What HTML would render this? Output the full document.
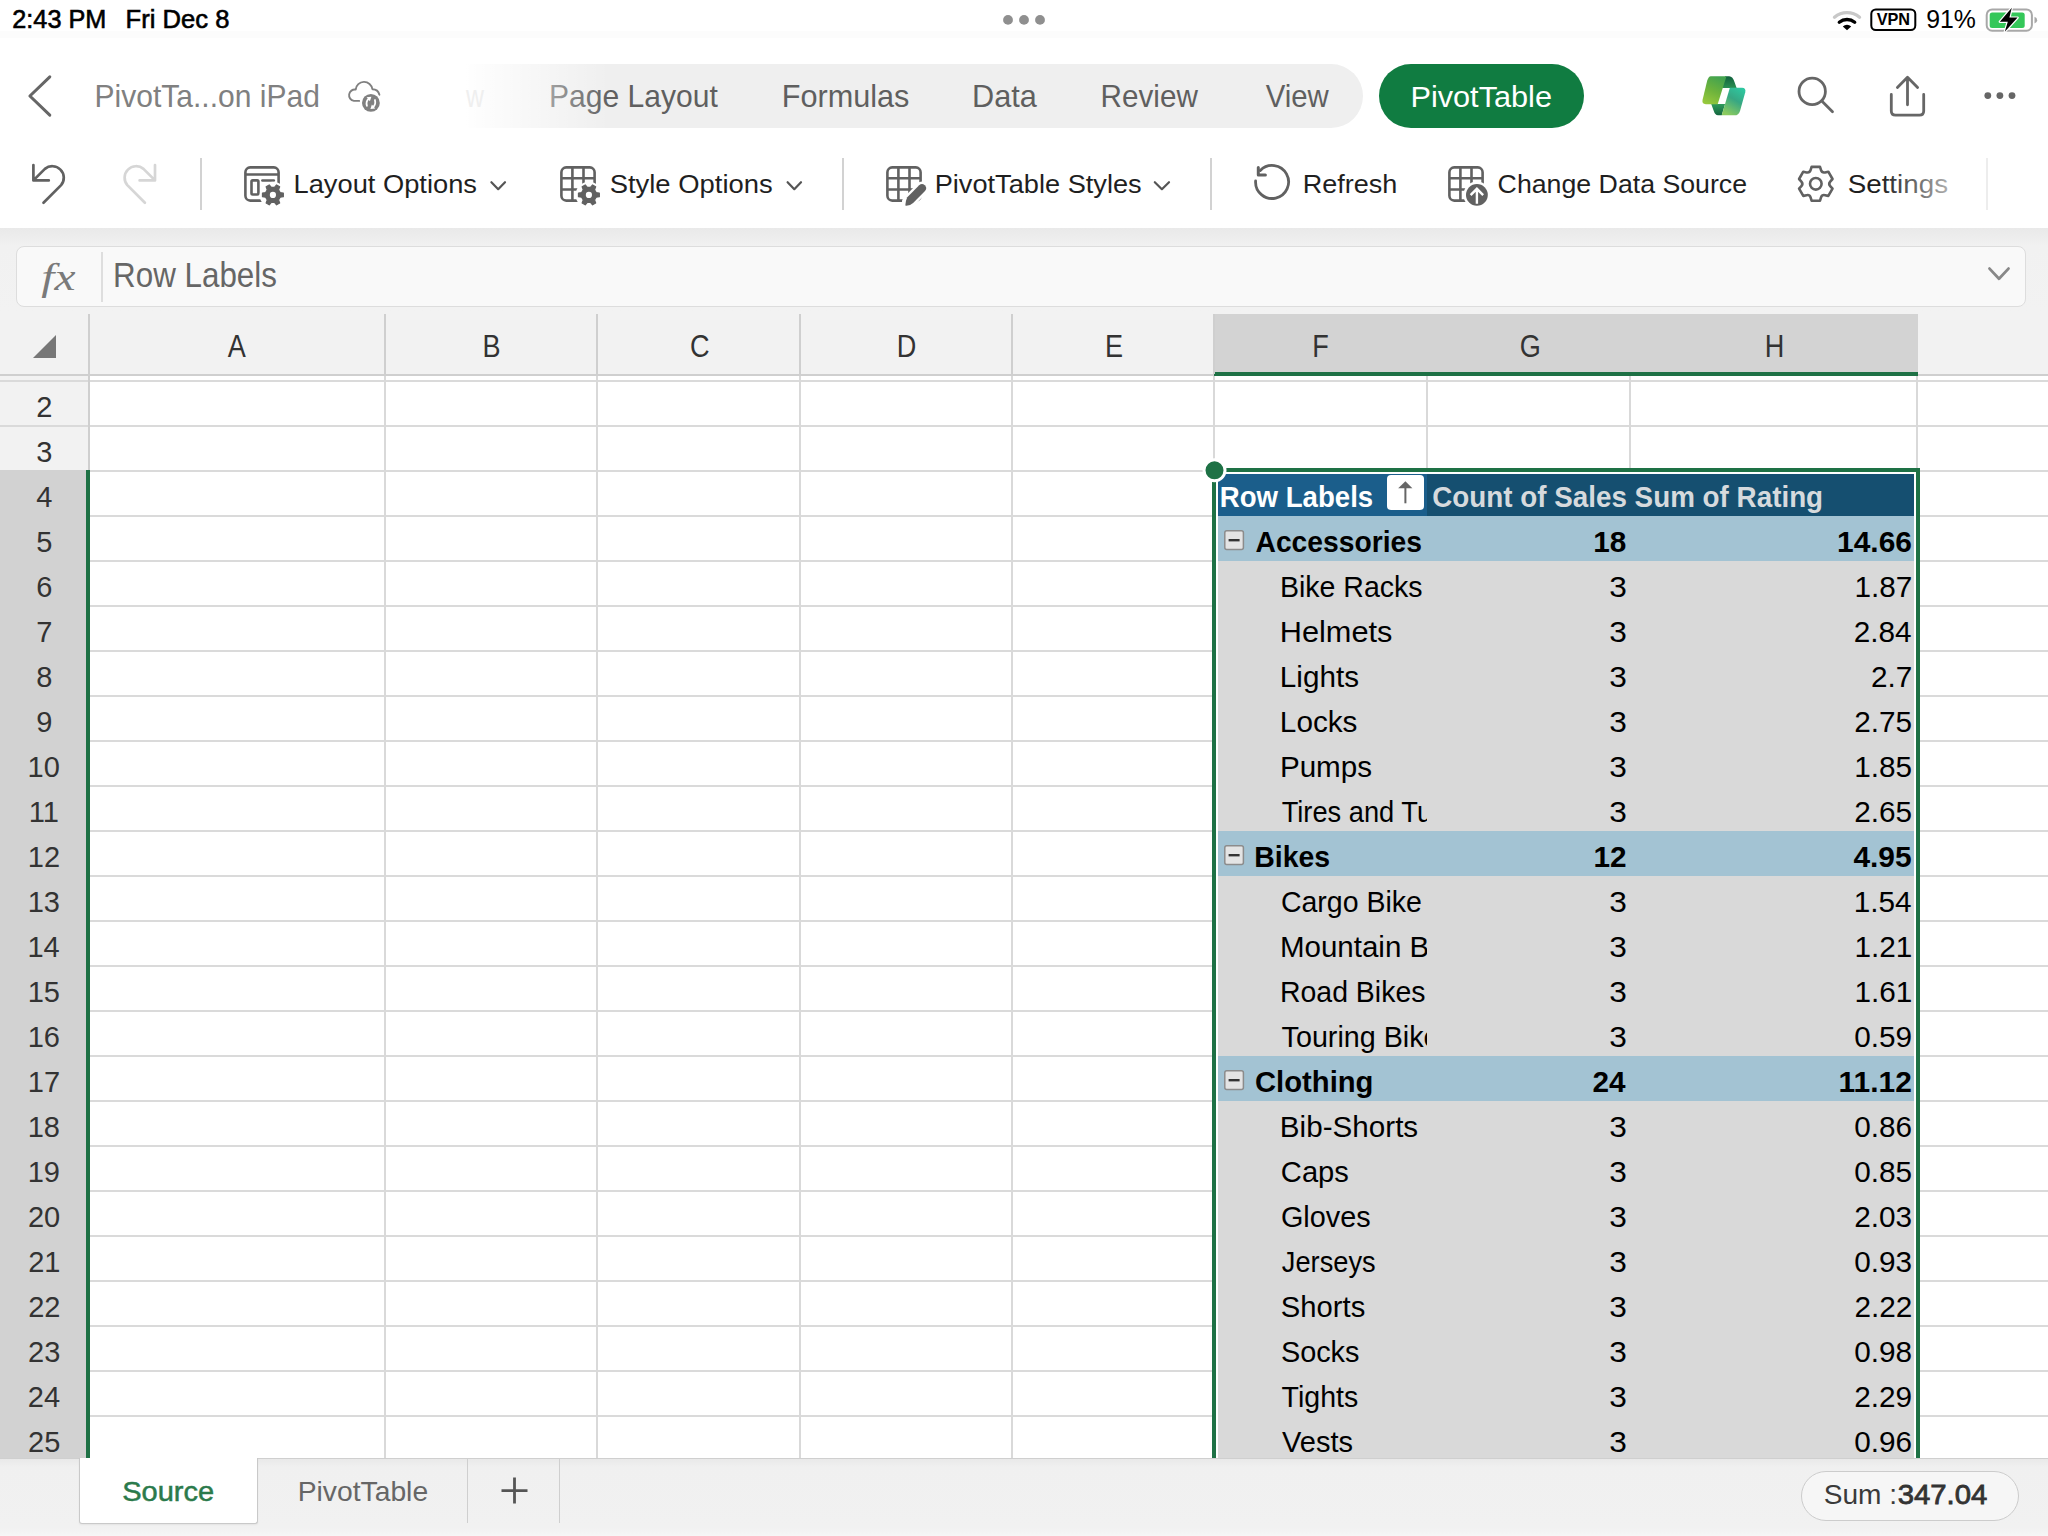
<!DOCTYPE html>
<html><head><meta charset="utf-8"><title>Excel PivotTable</title>
<style>
html,body{margin:0;padding:0;}
body{width:2048px;height:1536px;overflow:hidden;position:relative;background:#fff;font-family:'Liberation Sans', sans-serif;}
svg text{font-family:'Liberation Sans', sans-serif;white-space:pre;}
</style></head><body>
<div style="position:absolute;left:0px;top:0px;width:2048px;height:31px;background:#fff"></div><div style="position:absolute;left:0px;top:31px;width:2048px;height:8px;background:#fcfcfc"></div><div style="position:absolute;left:0px;top:38px;width:2048px;height:190px;background:#fff"></div><div style="position:absolute;left:0px;top:228px;width:2048px;height:86px;background:linear-gradient(#e9e9e9,#f1f1f1 18px,#f2f2f2)"></div><div style="position:absolute;left:16px;top:246px;width:2010px;height:61px;box-sizing:border-box;background:#f9f9f9;border:1.5px solid #dddddd;border-radius:8px"></div><div style="position:absolute;left:101px;top:252px;width:1.5px;height:50px;background:#dedede"></div><div style="position:absolute;left:0px;top:314px;width:2048px;height:60px;background:#f2f2f2"></div><div style="position:absolute;left:1214px;top:314px;width:704px;height:58px;background:#d3d3d3"></div><div style="position:absolute;left:1214px;top:372px;width:704px;height:4px;background:#1e7145"></div><div style="position:absolute;left:0px;top:374px;width:1214px;height:2px;background:#cfcfcf"></div><div style="position:absolute;left:1918px;top:374px;width:130px;height:2px;background:#cfcfcf"></div><div style="position:absolute;left:88px;top:314px;width:2px;height:60px;background:#cfcfcf"></div><div style="position:absolute;left:384px;top:314px;width:2px;height:60px;background:#cfcfcf"></div><div style="position:absolute;left:596px;top:314px;width:2px;height:60px;background:#cfcfcf"></div><div style="position:absolute;left:799px;top:314px;width:2px;height:60px;background:#cfcfcf"></div><div style="position:absolute;left:1011px;top:314px;width:2px;height:60px;background:#cfcfcf"></div><div style="position:absolute;left:1213px;top:314px;width:2px;height:60px;background:#cfcfcf"></div><div style="position:absolute;left:0px;top:376px;width:2048px;height:1082px;background:#fff"></div><div style="position:absolute;left:0px;top:376px;width:88px;height:94px;background:#f2f2f2"></div><div style="position:absolute;left:0px;top:470px;width:86px;height:988px;background:#d2d2d2"></div><div style="position:absolute;left:86px;top:470px;width:4px;height:988px;background:#1e7145"></div><div style="position:absolute;left:88px;top:376px;width:2px;height:94px;background:#cfcfcf"></div><div style="position:absolute;left:0px;top:380px;width:88px;height:2px;background:#dadada"></div><div style="position:absolute;left:90px;top:380px;width:1958px;height:2px;background:#dadada"></div><div style="position:absolute;left:0px;top:425px;width:88px;height:2px;background:#dadada"></div><div style="position:absolute;left:90px;top:425px;width:1958px;height:2px;background:#dadada"></div><div style="position:absolute;left:90px;top:470px;width:1958px;height:2px;background:#dadada"></div><div style="position:absolute;left:90px;top:515px;width:1958px;height:2px;background:#dadada"></div><div style="position:absolute;left:90px;top:560px;width:1958px;height:2px;background:#dadada"></div><div style="position:absolute;left:90px;top:605px;width:1958px;height:2px;background:#dadada"></div><div style="position:absolute;left:90px;top:650px;width:1958px;height:2px;background:#dadada"></div><div style="position:absolute;left:90px;top:695px;width:1958px;height:2px;background:#dadada"></div><div style="position:absolute;left:90px;top:740px;width:1958px;height:2px;background:#dadada"></div><div style="position:absolute;left:90px;top:785px;width:1958px;height:2px;background:#dadada"></div><div style="position:absolute;left:90px;top:830px;width:1958px;height:2px;background:#dadada"></div><div style="position:absolute;left:90px;top:875px;width:1958px;height:2px;background:#dadada"></div><div style="position:absolute;left:90px;top:920px;width:1958px;height:2px;background:#dadada"></div><div style="position:absolute;left:90px;top:965px;width:1958px;height:2px;background:#dadada"></div><div style="position:absolute;left:90px;top:1010px;width:1958px;height:2px;background:#dadada"></div><div style="position:absolute;left:90px;top:1055px;width:1958px;height:2px;background:#dadada"></div><div style="position:absolute;left:90px;top:1100px;width:1958px;height:2px;background:#dadada"></div><div style="position:absolute;left:90px;top:1145px;width:1958px;height:2px;background:#dadada"></div><div style="position:absolute;left:90px;top:1190px;width:1958px;height:2px;background:#dadada"></div><div style="position:absolute;left:90px;top:1235px;width:1958px;height:2px;background:#dadada"></div><div style="position:absolute;left:90px;top:1280px;width:1958px;height:2px;background:#dadada"></div><div style="position:absolute;left:90px;top:1325px;width:1958px;height:2px;background:#dadada"></div><div style="position:absolute;left:90px;top:1370px;width:1958px;height:2px;background:#dadada"></div><div style="position:absolute;left:90px;top:1415px;width:1958px;height:2px;background:#dadada"></div><div style="position:absolute;left:384px;top:376px;width:2px;height:1082px;background:#d9d9d9"></div><div style="position:absolute;left:596px;top:376px;width:2px;height:1082px;background:#d9d9d9"></div><div style="position:absolute;left:799px;top:376px;width:2px;height:1082px;background:#d9d9d9"></div><div style="position:absolute;left:1011px;top:376px;width:2px;height:1082px;background:#d9d9d9"></div><div style="position:absolute;left:1213px;top:376px;width:2px;height:1082px;background:#d9d9d9"></div><div style="position:absolute;left:1426px;top:376px;width:2px;height:1082px;background:#d9d9d9"></div><div style="position:absolute;left:1629px;top:376px;width:2px;height:1082px;background:#d9d9d9"></div><div style="position:absolute;left:1916px;top:376px;width:2px;height:1082px;background:#d9d9d9"></div><div style="position:absolute;left:1212px;top:468px;width:708px;height:990px;box-sizing:border-box;border:4px solid #1e7145;border-bottom:none;background:#fff"></div><div style="position:absolute;left:1218px;top:474px;width:209px;height:42px;background:#1b5e8b"></div><div style="position:absolute;left:1427px;top:474px;width:487px;height:42px;background:#154f70"></div><div style="position:absolute;left:1218px;top:516px;width:696px;height:45px;background:#a3c3d3"></div><div style="position:absolute;left:1218px;top:561px;width:696px;height:45px;background:#d9d9d9"></div><div style="position:absolute;left:1218px;top:606px;width:696px;height:45px;background:#d9d9d9"></div><div style="position:absolute;left:1218px;top:651px;width:696px;height:45px;background:#d9d9d9"></div><div style="position:absolute;left:1218px;top:696px;width:696px;height:45px;background:#d9d9d9"></div><div style="position:absolute;left:1218px;top:741px;width:696px;height:45px;background:#d9d9d9"></div><div style="position:absolute;left:1218px;top:786px;width:696px;height:45px;background:#d9d9d9"></div><div style="position:absolute;left:1218px;top:831px;width:696px;height:45px;background:#a3c3d3"></div><div style="position:absolute;left:1218px;top:876px;width:696px;height:45px;background:#d9d9d9"></div><div style="position:absolute;left:1218px;top:921px;width:696px;height:45px;background:#d9d9d9"></div><div style="position:absolute;left:1218px;top:966px;width:696px;height:45px;background:#d9d9d9"></div><div style="position:absolute;left:1218px;top:1011px;width:696px;height:45px;background:#d9d9d9"></div><div style="position:absolute;left:1218px;top:1056px;width:696px;height:45px;background:#a3c3d3"></div><div style="position:absolute;left:1218px;top:1101px;width:696px;height:45px;background:#d9d9d9"></div><div style="position:absolute;left:1218px;top:1146px;width:696px;height:45px;background:#d9d9d9"></div><div style="position:absolute;left:1218px;top:1191px;width:696px;height:45px;background:#d9d9d9"></div><div style="position:absolute;left:1218px;top:1236px;width:696px;height:45px;background:#d9d9d9"></div><div style="position:absolute;left:1218px;top:1281px;width:696px;height:45px;background:#d9d9d9"></div><div style="position:absolute;left:1218px;top:1326px;width:696px;height:45px;background:#d9d9d9"></div><div style="position:absolute;left:1218px;top:1371px;width:696px;height:45px;background:#d9d9d9"></div><div style="position:absolute;left:1218px;top:1416px;width:696px;height:42px;background:#d9d9d9"></div><div style="position:absolute;left:0px;top:1458px;width:2048px;height:78px;background:linear-gradient(#e8e8e8,#f0f0f0 9px,#f1f1f1 70px,#f6f6f6)"></div><div style="position:absolute;left:0px;top:1458px;width:2048px;height:1px;background:#cfcfcf"></div><div style="position:absolute;left:79px;top:1458px;width:179px;height:66px;box-sizing:border-box;background:#fff;border:1px solid #c9c9c9;border-top:none;border-radius:0 0 3px 3px;box-shadow:0 1px 2px rgba(0,0,0,0.06)"></div><div style="position:absolute;left:467px;top:1459px;width:1px;height:64px;background:#cfcfcf"></div><div style="position:absolute;left:559px;top:1459px;width:1px;height:64px;background:#cfcfcf"></div><div style="position:absolute;left:1801px;top:1471px;width:218px;height:50px;box-sizing:border-box;background:#f6f6f6;border:1px solid #cccccc;border-radius:25px"></div><div style="position:absolute;left:440px;top:64px;width:923px;height:64px;background:#efefef;border-radius:32px"></div><div style="position:absolute;left:1379px;top:64px;width:205px;height:64px;background:#107c41;border-radius:32px"></div><div style="position:absolute;left:200px;top:158px;width:2px;height:52px;background:#d2d2d2"></div><div style="position:absolute;left:842px;top:158px;width:2px;height:52px;background:#d2d2d2"></div><div style="position:absolute;left:1210px;top:158px;width:2px;height:52px;background:#d2d2d2"></div><div style="position:absolute;left:1986px;top:158px;width:2px;height:52px;background:#ededed"></div>
<svg width="2048" height="1536" viewBox="0 0 2048 1536" style="position:absolute;left:0;top:0">
<text x="12.34" y="27.70" font-size="25" fill="#000" textLength="93.98" lengthAdjust="spacingAndGlyphs" stroke="#000" stroke-width="0.6">2:43 PM</text>
<text x="125.55" y="27.70" font-size="25" fill="#000" textLength="103.82" lengthAdjust="spacingAndGlyphs" stroke="#000" stroke-width="0.6">Fri Dec 8</text>
<circle cx="1008" cy="19.9" r="4.9" fill="#8f8f8f"/>
<circle cx="1024" cy="19.9" r="4.9" fill="#8f8f8f"/>
<circle cx="1040" cy="19.9" r="4.9" fill="#8f8f8f"/>
<text x="1926.16" y="27.80" font-size="25" fill="#000" textLength="49.67" lengthAdjust="spacingAndGlyphs">91%</text>
<path d="M1834.5,17.2 A19.5,19.5 0 0 1 1859.5,17.2" fill="none" stroke="#c8c8c8" stroke-width="3.4" stroke-linecap="round"/>
<path d="M1839.3,22.3 A12.2,12.2 0 0 1 1854.7,22.3" fill="none" stroke="#000" stroke-width="3.4" stroke-linecap="round"/>
<path d="M1842.8,26.4 L1847,30.2 L1851.2,26.4 A6,6 0 0 0 1842.8,26.4Z" fill="#000"/>
<rect x="1871.3" y="9.4" width="44" height="20.6" rx="4.5" fill="none" stroke="#000" stroke-width="2"/>
<text x="1876.69" y="24.70" font-size="15.7" font-weight="bold" fill="#000" textLength="33.43" lengthAdjust="spacingAndGlyphs">VPN</text>
<rect x="1986.7" y="9.4" width="45.2" height="21.3" rx="5.5" fill="none" stroke="#a8a8a8" stroke-width="2"/>
<rect x="1989.7" y="12.4" width="35" height="15.6" rx="2.5" fill="#34c759"/>
<path d="M2034.5,16.8 A3.5,3.5 0 0 1 2034.5,23.6Z" fill="#a8a8a8"/>
<path d="M2011.8,7.8 L1999.8,21.7 L2007.8,21.7 L2004.8,31.8 L2017.6,17.6 L2009.4,17.6 Z" fill="#000" stroke="#fff" stroke-width="2.4" stroke-linejoin="round" paint-order="stroke"/>
<path d="M49.8,76.8 L29.9,96 L49.8,115.2" fill="none" stroke="#666" stroke-width="3" stroke-linecap="round" stroke-linejoin="round"/>
<text x="94.51" y="107.00" font-size="30.7" fill="#808080" textLength="225.41" lengthAdjust="spacingAndGlyphs">PivotTa...on iPad</text>
<path d="M359.2,100.9 L353.9,100.9 A5.7,5.7 0 0 1 355.7,89.6 A8.4,8.4 0 0 1 372.4,89.2 A7.2,7.2 0 0 1 379.4,94.8" fill="none" stroke="#808080" stroke-width="1.9" stroke-linecap="round" stroke-linejoin="round"/>
<circle cx="370.9" cy="102.9" r="10.6" fill="#fff"/><circle cx="370.9" cy="102.9" r="8.9" fill="#808080"/>
<path d="M366.9,105.8 Q365.6,101.2 368.9,98.6 M374.9,100 Q376.2,104.6 372.9,107.2" fill="none" stroke="#fff" stroke-width="1.8" stroke-linecap="round"/>
<path d="M366.6,97.2 L371.4,96.8 L369.9,101.2Z M375.2,108.6 L370.4,109 L371.9,104.6Z" fill="#fff"/>
<text x="548.91" y="107.20" font-size="30.7" fill="#5f5f5f" textLength="168.87" lengthAdjust="spacingAndGlyphs">Page Layout</text>
<text x="781.66" y="107.20" font-size="30.7" fill="#5f5f5f" textLength="127.74" lengthAdjust="spacingAndGlyphs">Formulas</text>
<text x="972.05" y="107.20" font-size="30.7" fill="#5f5f5f" textLength="64.85" lengthAdjust="spacingAndGlyphs">Data</text>
<text x="1100.54" y="107.20" font-size="30.7" fill="#5f5f5f" textLength="97.28" lengthAdjust="spacingAndGlyphs">Review</text>
<text x="1265.71" y="107.20" font-size="30.7" fill="#5f5f5f" textLength="63.13" lengthAdjust="spacingAndGlyphs">View</text>
<text x="1410.44" y="106.70" font-size="30" fill="#ffffff" textLength="141.54" lengthAdjust="spacingAndGlyphs">PivotTable</text>
<defs><linearGradient id="fadeL" x1="0" x2="1" y1="0" y2="0"><stop offset="0" stop-color="#fff" stop-opacity="1"/><stop offset="0.24" stop-color="#fff" stop-opacity="1"/><stop offset="0.3" stop-color="#fff" stop-opacity="0.9"/><stop offset="1" stop-color="#fff" stop-opacity="0"/></linearGradient><linearGradient id="fadeR" x1="0" x2="1" y1="0" y2="0"><stop offset="0" stop-color="#fff" stop-opacity="0"/><stop offset="1" stop-color="#fff" stop-opacity="0.75"/></linearGradient><linearGradient id="cpL" x1="0.2" y1="1" x2="0.6" y2="0"><stop offset="0" stop-color="#98c93c"/><stop offset="0.5" stop-color="#6db33c"/><stop offset="1" stop-color="#43a34f"/></linearGradient><linearGradient id="cpD1" x1="0" y1="0" x2="0" y2="1"><stop offset="0" stop-color="#10603c"/><stop offset="1" stop-color="#2a8f52"/></linearGradient><linearGradient id="cpD2" x1="0" y1="0" x2="0" y2="1"><stop offset="0" stop-color="#2f9a5c"/><stop offset="1" stop-color="#14663f"/></linearGradient><linearGradient id="cpR" x1="0.8" y1="0" x2="0.3" y2="1"><stop offset="0" stop-color="#2ec7a0"/><stop offset="0.45" stop-color="#37a783"/><stop offset="1" stop-color="#8ccb5e"/></linearGradient><clipPath id="clipF"><rect x="1218" y="470" width="209" height="990"/></clipPath></defs>
<rect x="420" y="60" width="190" height="72" fill="url(#fadeL)"/>
<text x="465.96" y="107.20" font-size="30.7" fill="#efefef" textLength="17.97" lengthAdjust="spacingAndGlyphs">w</text>
<g transform="translate(1696,70) scale(0.033852)"><path d="M860,185 L980,185 Q1090,190 1140,360 L1200,530 L770,530 Z" fill="url(#cpD1)"/><path d="M450,1005 L860,1005 L760,1340 L650,1340 Q560,1335 520,1200 Z" fill="url(#cpD2)"/><path d="M440,185 L900,185 L640,1010 L290,1010 Q165,1005 195,880 L330,320 Q365,190 440,185 Z" fill="url(#cpL)"/><path d="M1000,525 L1360,525 Q1485,530 1455,660 L1300,1210 Q1260,1340 1140,1340 L760,1340 Z" fill="url(#cpR)"/></g>
<circle cx="1812.2" cy="91.4" r="13.2" fill="none" stroke="#666" stroke-width="2.8"/><line x1="1821.8" y1="101" x2="1832.5" y2="111.8" stroke="#666" stroke-width="2.8" stroke-linecap="round"/>
<path d="M1891.3,94.5 L1891.3,111 Q1891.3,115.2 1895.5,115.2 L1919.5,115.2 Q1923.7,115.2 1923.7,111 L1923.7,94.5" fill="none" stroke="#666" stroke-width="2.8" stroke-linecap="round" stroke-linejoin="round"/>
<path d="M1907.5,104.8 L1907.5,77.5 M1897.4,87.6 L1907.5,77.3 L1917.6,87.6" fill="none" stroke="#666" stroke-width="2.8" stroke-linecap="round" stroke-linejoin="round"/>
<circle cx="1987.8" cy="95.6" r="3.4" fill="#666"/>
<circle cx="1999.9" cy="95.6" r="3.4" fill="#666"/>
<circle cx="2012" cy="95.6" r="3.4" fill="#666"/>
<path d="M33.4,165 V180.4 H48.8 M33.4,180.4 L44.9,168.9 A11.5,11.5 0 0 1 61.1,185.1 L43.5,202.7" fill="none" stroke="#616161" stroke-width="2.7" stroke-linecap="round" stroke-linejoin="round"/>
<path d="M155,165 V180.4 H139.6 M155,180.4 L143.5,168.9 A11.5,11.5 0 0 0 127.3,185.1 L144.9,202.7" fill="none" stroke="#d6d6d6" stroke-width="2.7" stroke-linecap="round" stroke-linejoin="round"/>
<rect x="245.40" y="167.40" width="33.2" height="33.2" rx="4.8" fill="none" stroke="#616161" stroke-width="2.6"/><line x1="245.40" y1="174.50" x2="278.60" y2="174.50" stroke="#616161" stroke-width="2.6"/><rect x="251.50" y="180.40" width="6.9" height="14.1" rx="1.2" fill="none" stroke="#616161" stroke-width="2.6"/><line x1="262.40" y1="180.50" x2="273.80" y2="180.50" stroke="#616161" stroke-width="2.6" stroke-linecap="round"/>
<circle cx="272.90" cy="194.90" r="13.2" fill="#fff"/><path d="M280.13,192.55 L283.35,193.13 L283.35,196.67 L280.13,197.25 L278.55,199.99 L279.66,203.07 L276.59,204.84 L274.48,202.33 L271.32,202.33 L269.21,204.84 L266.14,203.07 L267.25,199.99 L265.67,197.25 L262.45,196.67 L262.45,193.13 L265.67,192.55 L267.25,189.81 L266.14,186.73 L269.21,184.96 L271.32,187.47 L274.48,187.47 L276.59,184.96 L279.66,186.73 L278.55,189.81Z" fill="#616161" stroke="#616161" stroke-width="1.2" stroke-linejoin="round"/><circle cx="272.90" cy="194.90" r="6.4" fill="#616161"/><circle cx="272.90" cy="194.90" r="3.1" fill="#fff"/>
<rect x="561.40" y="167.40" width="33.2" height="33.2" rx="4.8" fill="none" stroke="#616161" stroke-width="2.6"/><line x1="572.40" y1="167.40" x2="572.40" y2="200.60" stroke="#616161" stroke-width="2.6"/><line x1="583.50" y1="167.40" x2="583.50" y2="200.60" stroke="#616161" stroke-width="2.6"/><line x1="561.40" y1="178.20" x2="594.60" y2="178.20" stroke="#616161" stroke-width="2.6"/><line x1="561.40" y1="189.50" x2="594.60" y2="189.50" stroke="#616161" stroke-width="2.6"/>
<circle cx="588.90" cy="194.90" r="13.2" fill="#fff"/><path d="M596.13,192.55 L599.35,193.13 L599.35,196.67 L596.13,197.25 L594.55,199.99 L595.66,203.07 L592.59,204.84 L590.48,202.33 L587.32,202.33 L585.21,204.84 L582.14,203.07 L583.25,199.99 L581.67,197.25 L578.45,196.67 L578.45,193.13 L581.67,192.55 L583.25,189.81 L582.14,186.73 L585.21,184.96 L587.32,187.47 L590.48,187.47 L592.59,184.96 L595.66,186.73 L594.55,189.81Z" fill="#616161" stroke="#616161" stroke-width="1.2" stroke-linejoin="round"/><circle cx="588.90" cy="194.90" r="6.4" fill="#616161"/><circle cx="588.90" cy="194.90" r="3.1" fill="#fff"/>
<rect x="887.40" y="167.40" width="33.2" height="33.2" rx="4.8" fill="none" stroke="#616161" stroke-width="2.6"/><line x1="898.40" y1="167.40" x2="898.40" y2="200.60" stroke="#616161" stroke-width="2.6"/><line x1="909.50" y1="167.40" x2="909.50" y2="200.60" stroke="#616161" stroke-width="2.6"/><line x1="887.40" y1="178.20" x2="920.60" y2="178.20" stroke="#616161" stroke-width="2.6"/><line x1="887.40" y1="189.50" x2="920.60" y2="189.50" stroke="#616161" stroke-width="2.6"/>
<line x1="922.1" y1="188.1" x2="908.5" y2="202" stroke="#fff" stroke-width="13" stroke-linecap="round"/>
<path d="M919.18,185.23 A4.1,4.1 0 0 1 925.02,190.97 L913.12,203.07 Q910,206 905.3,205.6 Q905.6,200.6 907.28,197.33 Z" fill="#616161"/>
<rect x="1449.40" y="167.40" width="33.2" height="33.2" rx="4.8" fill="none" stroke="#616161" stroke-width="2.6"/><line x1="1460.40" y1="167.40" x2="1460.40" y2="200.60" stroke="#616161" stroke-width="2.6"/><line x1="1471.50" y1="167.40" x2="1471.50" y2="200.60" stroke="#616161" stroke-width="2.6"/><line x1="1449.40" y1="178.20" x2="1482.60" y2="178.20" stroke="#616161" stroke-width="2.6"/><line x1="1449.40" y1="189.50" x2="1482.60" y2="189.50" stroke="#616161" stroke-width="2.6"/>
<circle cx="1476.9" cy="194.9" r="13.4" fill="#fff"/><circle cx="1476.9" cy="194.9" r="10.9" fill="#616161"/>
<path d="M1476.9,202.5 V189.2 M1471.5,194.2 L1476.9,188.8 L1482.3,194.2" fill="none" stroke="#fff" stroke-width="2.4" stroke-linecap="square"/>
<path d="M1255.6,181 A16.5,16.5 0 1 0 1260.3,170.4" fill="none" stroke="#616161" stroke-width="2.8" stroke-linecap="round"/>
<path d="M1258.3,167.5 V175 H1265.4" fill="none" stroke="#616161" stroke-width="3" stroke-linecap="round" stroke-linejoin="round"/>
<path d="M1810.57,170.17 L1811.59,166.92 L1820.01,166.92 L1821.03,170.17 Q1822.00,173.06 1824.99,172.45 L1828.32,171.71 L1832.53,179.00 L1830.22,181.52 Q1828.20,183.80 1830.22,186.08 L1832.53,188.60 L1828.32,195.89 L1824.99,195.15 Q1822.00,194.54 1821.03,197.43 L1820.01,200.68 L1811.59,200.68 L1810.57,197.43 Q1809.60,194.54 1806.61,195.15 L1803.28,195.89 L1799.07,188.60 L1801.38,186.08 Q1803.40,183.80 1801.38,181.52 L1799.07,179.00 L1803.28,171.71 L1806.61,172.45 Q1809.60,173.06 1810.57,170.17 Z" fill="none" stroke="#616161" stroke-width="2.6" stroke-linejoin="round"/>
<circle cx="1815.8" cy="183.8" r="5.8" fill="none" stroke="#616161" stroke-width="2.6"/>
<path d="M491.4,182.2 L498.2,189.2 L505,182.2" fill="none" stroke="#555" stroke-width="2.2" stroke-linecap="round" stroke-linejoin="round"/>
<path d="M787.6,182.2 L794.3,189.2 L801,182.2" fill="none" stroke="#555" stroke-width="2.2" stroke-linecap="round" stroke-linejoin="round"/>
<path d="M1154.8,182.2 L1161.9,189.2 L1169,182.2" fill="none" stroke="#555" stroke-width="2.2" stroke-linecap="round" stroke-linejoin="round"/>
<text x="293.48" y="192.80" font-size="26.5" fill="#1f1f1f" textLength="183.55" lengthAdjust="spacingAndGlyphs">Layout Options</text>
<text x="609.71" y="192.80" font-size="26.5" fill="#1f1f1f" textLength="162.94" lengthAdjust="spacingAndGlyphs">Style Options</text>
<text x="934.69" y="192.80" font-size="26.5" fill="#1f1f1f" textLength="206.98" lengthAdjust="spacingAndGlyphs">PivotTable Styles</text>
<text x="1302.71" y="192.80" font-size="26.5" fill="#1f1f1f" textLength="94.62" lengthAdjust="spacingAndGlyphs">Refresh</text>
<text x="1497.64" y="192.80" font-size="26.5" fill="#1f1f1f" textLength="249.42" lengthAdjust="spacingAndGlyphs">Change Data Source</text>
<text x="1847.69" y="192.80" font-size="26.5" fill="#1f1f1f" textLength="100.36" lengthAdjust="spacingAndGlyphs">Settings</text>
<rect x="1880" y="160" width="80" height="50" fill="url(#fadeR)"/>
<text x="41.38" y="289.80" style="font-family:'Liberation Serif';font-style:italic" font-size="38" fill="#7a7a7a" textLength="34.15" lengthAdjust="spacingAndGlyphs">fx</text>
<text x="113.10" y="287.00" font-size="34.5" fill="#666666" textLength="163.85" lengthAdjust="spacingAndGlyphs">Row Labels</text>
<path d="M1989.5,268.6 L1999.0,278.8 L2008.5,268.6" fill="none" stroke="#888" stroke-width="2.8" stroke-linecap="round" stroke-linejoin="round"/>
<path d="M33,358 L56,335 L56,358Z" fill="#777"/>
<text x="227.77" y="357.00" font-size="31.5" fill="#333" textLength="18.07" lengthAdjust="spacingAndGlyphs">A</text>
<text x="482.45" y="357.00" font-size="31.5" fill="#333" textLength="18.07" lengthAdjust="spacingAndGlyphs">B</text>
<text x="689.91" y="357.00" font-size="31.5" fill="#333" textLength="19.57" lengthAdjust="spacingAndGlyphs">C</text>
<text x="896.79" y="357.00" font-size="31.5" fill="#333" textLength="19.57" lengthAdjust="spacingAndGlyphs">D</text>
<text x="1104.93" y="357.00" font-size="31.5" fill="#333" textLength="18.07" lengthAdjust="spacingAndGlyphs">E</text>
<text x="1312.18" y="357.00" font-size="31.5" fill="#333" textLength="16.55" lengthAdjust="spacingAndGlyphs">F</text>
<text x="1519.79" y="357.00" font-size="31.5" fill="#333" textLength="21.07" lengthAdjust="spacingAndGlyphs">G</text>
<text x="1764.82" y="357.00" font-size="31.5" fill="#333" textLength="19.57" lengthAdjust="spacingAndGlyphs">H</text>
<text x="36.31" y="416.80" font-size="30.3" fill="#333" textLength="16.15" lengthAdjust="spacingAndGlyphs">2</text>
<text x="36.31" y="461.80" font-size="30.3" fill="#333" textLength="16.15" lengthAdjust="spacingAndGlyphs">3</text>
<text x="36.31" y="506.80" font-size="30.3" fill="#333" textLength="16.15" lengthAdjust="spacingAndGlyphs">4</text>
<text x="36.31" y="551.80" font-size="30.3" fill="#333" textLength="16.15" lengthAdjust="spacingAndGlyphs">5</text>
<text x="36.19" y="596.80" font-size="30.3" fill="#333" textLength="16.15" lengthAdjust="spacingAndGlyphs">6</text>
<text x="36.31" y="641.80" font-size="30.3" fill="#333" textLength="16.15" lengthAdjust="spacingAndGlyphs">7</text>
<text x="36.31" y="686.80" font-size="30.3" fill="#333" textLength="16.15" lengthAdjust="spacingAndGlyphs">8</text>
<text x="36.19" y="731.80" font-size="30.3" fill="#333" textLength="16.15" lengthAdjust="spacingAndGlyphs">9</text>
<text x="27.55" y="776.80" font-size="30.3" fill="#333" textLength="32.30" lengthAdjust="spacingAndGlyphs">10</text>
<text x="28.87" y="821.80" font-size="30.3" fill="#333" textLength="30.15" lengthAdjust="spacingAndGlyphs">11</text>
<text x="27.79" y="866.80" font-size="30.3" fill="#333" textLength="32.30" lengthAdjust="spacingAndGlyphs">12</text>
<text x="27.67" y="911.80" font-size="30.3" fill="#333" textLength="32.30" lengthAdjust="spacingAndGlyphs">13</text>
<text x="27.43" y="956.80" font-size="30.3" fill="#333" textLength="32.30" lengthAdjust="spacingAndGlyphs">14</text>
<text x="27.67" y="1001.80" font-size="30.3" fill="#333" textLength="32.30" lengthAdjust="spacingAndGlyphs">15</text>
<text x="27.67" y="1046.80" font-size="30.3" fill="#333" textLength="32.30" lengthAdjust="spacingAndGlyphs">16</text>
<text x="27.79" y="1091.80" font-size="30.3" fill="#333" textLength="32.30" lengthAdjust="spacingAndGlyphs">17</text>
<text x="27.67" y="1136.80" font-size="30.3" fill="#333" textLength="32.30" lengthAdjust="spacingAndGlyphs">18</text>
<text x="27.67" y="1181.80" font-size="30.3" fill="#333" textLength="32.30" lengthAdjust="spacingAndGlyphs">19</text>
<text x="27.91" y="1226.80" font-size="30.3" fill="#333" textLength="32.30" lengthAdjust="spacingAndGlyphs">20</text>
<text x="28.15" y="1271.80" font-size="30.3" fill="#333" textLength="32.30" lengthAdjust="spacingAndGlyphs">21</text>
<text x="28.15" y="1316.80" font-size="30.3" fill="#333" textLength="32.30" lengthAdjust="spacingAndGlyphs">22</text>
<text x="28.03" y="1361.80" font-size="30.3" fill="#333" textLength="32.30" lengthAdjust="spacingAndGlyphs">23</text>
<text x="27.79" y="1406.80" font-size="30.3" fill="#333" textLength="32.30" lengthAdjust="spacingAndGlyphs">24</text>
<text x="28.03" y="1451.80" font-size="30.3" fill="#333" textLength="32.30" lengthAdjust="spacingAndGlyphs">25</text>
<circle cx="1214.5" cy="470.3" r="10.5" fill="#1e7145" stroke="#fff" stroke-width="3"/>
<text x="1219.83" y="506.50" font-size="30.2" font-weight="bold" fill="#ffffff" textLength="153.35" lengthAdjust="spacingAndGlyphs">Row Labels</text>
<rect x="1387" y="475" width="37" height="35" rx="4" fill="#fff"/>
<path d="M1405.4,503.3 V486" stroke="#666" stroke-width="2" fill="none"/><path d="M1398.2,488.2 L1405.4,481.3 L1412.4,488.2Z" fill="#666"/>
<text x="1432.20" y="506.50" font-size="30.2" font-weight="bold" fill="#d6dadd" textLength="390.93" lengthAdjust="spacingAndGlyphs">Count of Sales Sum of Rating</text>
<rect x="1224.8" y="530.8" width="18.6" height="18.6" rx="2" fill="#e4e4e4" stroke="#8c8c8c" stroke-width="1.5"/>
<line x1="1228.6" y1="540.2" x2="1239.6" y2="540.2" stroke="#333" stroke-width="2.4"/>
<text x="1255.51" y="551.60" font-size="30.4" font-weight="bold" fill="#000" textLength="166.53" lengthAdjust="spacingAndGlyphs">Accessories</text>
<text x="1593.20" y="551.60" font-size="29.7" font-weight="bold" fill="#000" textLength="33.09" lengthAdjust="spacingAndGlyphs">18</text>
<text x="1837.06" y="551.60" font-size="29.7" font-weight="bold" fill="#000" textLength="74.90" lengthAdjust="spacingAndGlyphs">14.66</text>
<g clip-path="url(#clipF)"><text x="1279.97" y="596.60" font-size="30.4" fill="#000" textLength="142.61" lengthAdjust="spacingAndGlyphs">Bike Racks</text></g>
<text x="1609.21" y="596.60" font-size="29.7" fill="#000" textLength="17.62" lengthAdjust="spacingAndGlyphs">3</text>
<text x="1854.50" y="596.60" font-size="29.7" fill="#000" textLength="57.91" lengthAdjust="spacingAndGlyphs">1.87</text>
<g clip-path="url(#clipF)"><text x="1279.78" y="641.60" font-size="30.4" fill="#000" textLength="112.63" lengthAdjust="spacingAndGlyphs">Helmets</text></g>
<text x="1609.21" y="641.60" font-size="29.7" fill="#000" textLength="17.62" lengthAdjust="spacingAndGlyphs">3</text>
<text x="1853.75" y="641.60" font-size="29.7" fill="#000" textLength="57.91" lengthAdjust="spacingAndGlyphs">2.84</text>
<g clip-path="url(#clipF)"><text x="1279.87" y="686.60" font-size="30.4" fill="#000" textLength="79.13" lengthAdjust="spacingAndGlyphs">Lights</text></g>
<text x="1609.21" y="686.60" font-size="29.7" fill="#000" textLength="17.62" lengthAdjust="spacingAndGlyphs">3</text>
<text x="1871.00" y="686.60" font-size="29.7" fill="#000" textLength="41.36" lengthAdjust="spacingAndGlyphs">2.7</text>
<g clip-path="url(#clipF)"><text x="1279.87" y="731.60" font-size="30.4" fill="#000" textLength="77.58" lengthAdjust="spacingAndGlyphs">Locks</text></g>
<text x="1609.21" y="731.60" font-size="29.7" fill="#000" textLength="17.62" lengthAdjust="spacingAndGlyphs">3</text>
<text x="1854.25" y="731.60" font-size="29.7" fill="#000" textLength="57.91" lengthAdjust="spacingAndGlyphs">2.75</text>
<g clip-path="url(#clipF)"><text x="1279.88" y="776.60" font-size="30.4" fill="#000" textLength="92.17" lengthAdjust="spacingAndGlyphs">Pumps</text></g>
<text x="1609.21" y="776.60" font-size="29.7" fill="#000" textLength="17.62" lengthAdjust="spacingAndGlyphs">3</text>
<text x="1854.25" y="776.60" font-size="29.7" fill="#000" textLength="57.91" lengthAdjust="spacingAndGlyphs">1.85</text>
<g clip-path="url(#clipF)"><text x="1281.64" y="821.60" font-size="30.4" fill="#000" textLength="194.35" lengthAdjust="spacingAndGlyphs">Tires and Tubes</text></g>
<text x="1609.21" y="821.60" font-size="29.7" fill="#000" textLength="17.62" lengthAdjust="spacingAndGlyphs">3</text>
<text x="1854.25" y="821.60" font-size="29.7" fill="#000" textLength="57.91" lengthAdjust="spacingAndGlyphs">2.65</text>
<rect x="1224.8" y="845.8" width="18.6" height="18.6" rx="2" fill="#e4e4e4" stroke="#8c8c8c" stroke-width="1.5"/>
<line x1="1228.6" y1="855.2" x2="1239.6" y2="855.2" stroke="#333" stroke-width="2.4"/>
<text x="1254.34" y="866.60" font-size="30.4" font-weight="bold" fill="#000" textLength="75.85" lengthAdjust="spacingAndGlyphs">Bikes</text>
<text x="1593.45" y="866.60" font-size="29.7" font-weight="bold" fill="#000" textLength="33.09" lengthAdjust="spacingAndGlyphs">12</text>
<text x="1853.41" y="866.60" font-size="29.7" font-weight="bold" fill="#000" textLength="58.25" lengthAdjust="spacingAndGlyphs">4.95</text>
<g clip-path="url(#clipF)"><text x="1280.91" y="911.60" font-size="30.4" fill="#000" textLength="140.88" lengthAdjust="spacingAndGlyphs">Cargo Bike</text></g>
<text x="1609.21" y="911.60" font-size="29.7" fill="#000" textLength="17.62" lengthAdjust="spacingAndGlyphs">3</text>
<text x="1853.75" y="911.60" font-size="29.7" fill="#000" textLength="57.91" lengthAdjust="spacingAndGlyphs">1.54</text>
<g clip-path="url(#clipF)"><text x="1279.88" y="956.60" font-size="30.4" fill="#000" textLength="201.84" lengthAdjust="spacingAndGlyphs">Mountain Bikes</text></g>
<text x="1609.21" y="956.60" font-size="29.7" fill="#000" textLength="17.62" lengthAdjust="spacingAndGlyphs">3</text>
<text x="1854.50" y="956.60" font-size="29.7" fill="#000" textLength="57.91" lengthAdjust="spacingAndGlyphs">1.21</text>
<g clip-path="url(#clipF)"><text x="1279.98" y="1001.60" font-size="30.4" fill="#000" textLength="145.46" lengthAdjust="spacingAndGlyphs">Road Bikes</text></g>
<text x="1609.21" y="1001.60" font-size="29.7" fill="#000" textLength="17.62" lengthAdjust="spacingAndGlyphs">3</text>
<text x="1854.50" y="1001.60" font-size="29.7" fill="#000" textLength="57.91" lengthAdjust="spacingAndGlyphs">1.61</text>
<g clip-path="url(#clipF)"><text x="1281.60" y="1046.60" font-size="30.4" fill="#000" textLength="172.22" lengthAdjust="spacingAndGlyphs">Touring Bikes</text></g>
<text x="1609.21" y="1046.60" font-size="29.7" fill="#000" textLength="17.62" lengthAdjust="spacingAndGlyphs">3</text>
<text x="1854.25" y="1046.60" font-size="29.7" fill="#000" textLength="57.91" lengthAdjust="spacingAndGlyphs">0.59</text>
<rect x="1224.8" y="1070.8" width="18.6" height="18.6" rx="2" fill="#e4e4e4" stroke="#8c8c8c" stroke-width="1.5"/>
<line x1="1228.6" y1="1080.2" x2="1239.6" y2="1080.2" stroke="#333" stroke-width="2.4"/>
<text x="1255.01" y="1091.60" font-size="30.4" font-weight="bold" fill="#000" textLength="118.45" lengthAdjust="spacingAndGlyphs">Clothing</text>
<text x="1592.45" y="1091.60" font-size="29.7" font-weight="bold" fill="#000" textLength="33.09" lengthAdjust="spacingAndGlyphs">24</text>
<text x="1838.57" y="1091.60" font-size="29.7" font-weight="bold" fill="#000" textLength="73.25" lengthAdjust="spacingAndGlyphs">11.12</text>
<g clip-path="url(#clipF)"><text x="1279.87" y="1136.60" font-size="30.4" fill="#000" textLength="138.33" lengthAdjust="spacingAndGlyphs">Bib-Shorts</text></g>
<text x="1609.21" y="1136.60" font-size="29.7" fill="#000" textLength="17.62" lengthAdjust="spacingAndGlyphs">3</text>
<text x="1854.25" y="1136.60" font-size="29.7" fill="#000" textLength="57.91" lengthAdjust="spacingAndGlyphs">0.86</text>
<g clip-path="url(#clipF)"><text x="1280.87" y="1181.60" font-size="30.4" fill="#000" textLength="67.98" lengthAdjust="spacingAndGlyphs">Caps</text></g>
<text x="1609.21" y="1181.60" font-size="29.7" fill="#000" textLength="17.62" lengthAdjust="spacingAndGlyphs">3</text>
<text x="1854.25" y="1181.60" font-size="29.7" fill="#000" textLength="57.91" lengthAdjust="spacingAndGlyphs">0.85</text>
<g clip-path="url(#clipF)"><text x="1280.89" y="1226.60" font-size="30.4" fill="#000" textLength="89.73" lengthAdjust="spacingAndGlyphs">Gloves</text></g>
<text x="1609.21" y="1226.60" font-size="29.7" fill="#000" textLength="17.62" lengthAdjust="spacingAndGlyphs">3</text>
<text x="1854.25" y="1226.60" font-size="29.7" fill="#000" textLength="57.91" lengthAdjust="spacingAndGlyphs">2.03</text>
<g clip-path="url(#clipF)"><text x="1281.86" y="1271.60" font-size="30.4" fill="#000" textLength="93.81" lengthAdjust="spacingAndGlyphs">Jerseys</text></g>
<text x="1609.21" y="1271.60" font-size="29.7" fill="#000" textLength="17.62" lengthAdjust="spacingAndGlyphs">3</text>
<text x="1854.25" y="1271.60" font-size="29.7" fill="#000" textLength="57.91" lengthAdjust="spacingAndGlyphs">0.93</text>
<g clip-path="url(#clipF)"><text x="1280.87" y="1316.60" font-size="30.4" fill="#000" textLength="84.43" lengthAdjust="spacingAndGlyphs">Shorts</text></g>
<text x="1609.21" y="1316.60" font-size="29.7" fill="#000" textLength="17.62" lengthAdjust="spacingAndGlyphs">3</text>
<text x="1854.50" y="1316.60" font-size="29.7" fill="#000" textLength="57.91" lengthAdjust="spacingAndGlyphs">2.22</text>
<g clip-path="url(#clipF)"><text x="1280.89" y="1361.60" font-size="30.4" fill="#000" textLength="78.62" lengthAdjust="spacingAndGlyphs">Socks</text></g>
<text x="1609.21" y="1361.60" font-size="29.7" fill="#000" textLength="17.62" lengthAdjust="spacingAndGlyphs">3</text>
<text x="1854.25" y="1361.60" font-size="29.7" fill="#000" textLength="57.91" lengthAdjust="spacingAndGlyphs">0.98</text>
<g clip-path="url(#clipF)"><text x="1281.61" y="1406.60" font-size="30.4" fill="#000" textLength="76.59" lengthAdjust="spacingAndGlyphs">Tights</text></g>
<text x="1609.21" y="1406.60" font-size="29.7" fill="#000" textLength="17.62" lengthAdjust="spacingAndGlyphs">3</text>
<text x="1854.25" y="1406.60" font-size="29.7" fill="#000" textLength="57.91" lengthAdjust="spacingAndGlyphs">2.29</text>
<g clip-path="url(#clipF)"><text x="1282.07" y="1451.60" font-size="30.4" fill="#000" textLength="70.98" lengthAdjust="spacingAndGlyphs">Vests</text></g>
<text x="1609.21" y="1451.60" font-size="29.7" fill="#000" textLength="17.62" lengthAdjust="spacingAndGlyphs">3</text>
<text x="1854.25" y="1451.60" font-size="29.7" fill="#000" textLength="57.91" lengthAdjust="spacingAndGlyphs">0.96</text>
<text x="122.15" y="1500.90" font-size="27.8" fill="#2b7a4b" textLength="91.94" lengthAdjust="spacingAndGlyphs" stroke="#2b7a4b" stroke-width="0.5">Source</text>
<text x="297.76" y="1501.00" font-size="27.8" fill="#666" textLength="130.34" lengthAdjust="spacingAndGlyphs">PivotTable</text>
<path d="M501.5,1490.6 H527.5 M514.5,1477.6 V1503.6" stroke="#555" stroke-width="2.8" fill="none"/>
<text x="1823.67" y="1504.00" font-size="28.4" fill="#3a3a3a" textLength="73.38" lengthAdjust="spacingAndGlyphs">Sum :</text>
<text x="1897.67" y="1503.80" font-size="28.4" fill="#333" textLength="89.68" lengthAdjust="spacingAndGlyphs" stroke="#333" stroke-width="0.8">347.04</text>
</svg>
</body></html>
